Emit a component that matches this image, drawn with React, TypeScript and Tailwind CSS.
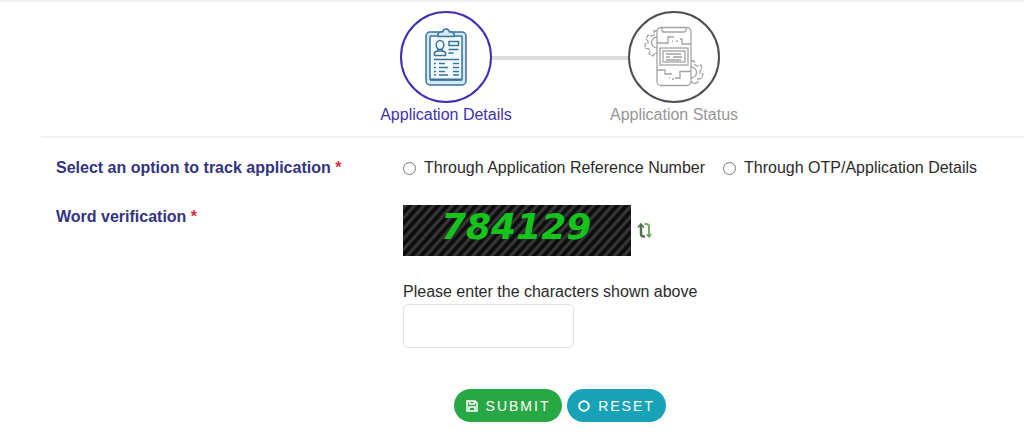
import type { ReactNode } from "react";

const ClipboardIcon = () => (
  <svg
    width={42}
    height={58}
    viewBox="0 0 42 58"
    fill="none"
    stroke="#3a7397"
    strokeWidth={1.5}
    aria-hidden="true"
  >
    <rect x="1" y="4" width="40" height="53" rx="4" fill="#cfe9f7" />
    <rect x="5" y="8" width="32" height="44" rx="1" fill="#f2fbff" />
    <path d="M13 8.500V5.500L15 4H17.500C18 2 19.500 1 21 1s3 1 3.500 3H27l2 1.500v3Z" fill="#cfe9f7" />
    <ellipse cx="15" cy="17" rx="3.800" ry="4.500" />
    <path d="M13 21v2.500M17 21v2.500M9.500 27.500v-3l2.500-1.500h6l2.500 1.500v3Z" />
    <rect x="24" y="13.500" width="9.500" height="4" />
    <path d="M23.500 21.500h10M23.500 25h5M9 31.500h25" />
    <path d="M9 35.500h2M14 35.500h6M28 35.500h6M9 39.500h2M14 39.500h9M28 39.500h6M9 43.500h2M14 43.500h6M28 43.500h6M9 47h2M14 47h9M28 47h6" />
    <path d="M5 51.500h32" strokeWidth={2} />
  </svg>
);

const PhoneGearsIcon = () => (
  <svg
    width={60}
    height={62}
    viewBox="0 0 60 62"
    fill="none"
    stroke="#a3a3a3"
    strokeWidth={1.3}
    aria-hidden="true"
  >
    <rect x="13" y="1.500" width="34" height="58" rx="4" />
    <path d="M18 2v2.500q0 1.500 2 1.500h20q2 0 2-1.500V2" />
    <path d="M13 17h11v-6h6M36 13h2v5h9M28 15h1M32 15h2" />
    <path d="M13 44h8v4h7M47 45.500H36V52h-5M25 52h1M28 53h2" />
    <rect x="16" y="22" width="28" height="17" />
    <rect x="19" y="25" width="22" height="11" />
    <path d="M22 28h15M22 31h4M29 31h9M22 34h15" />
    <path d="M13 5h-3v4l-3 1-3-1-2 4 2 2v2l-3 1v4l4 1 1 2-1 3 4 2 2-3h2" strokeDasharray="5 1" />
    <path d="M13 11a5.500 5.500 0 0 0 0 11" />
    <path
      d="M47 35h3l1 4 3 1 3-1 1 4-2 2v2l3 1-1 4-4 1v3l-4 2-2-2h-1"
      strokeDasharray="5 1"
    />
    <path d="M47 41a5.500 5.500 0 0 1 0 11" />
  </svg>
);

const RefreshIcon = () => (
  <svg width={16} height={17} viewBox="0 0 16 17" fill="none" aria-hidden="true">
    <path d="M4 3v9q0 2.500 2.500 2.500H8" stroke="#52704f" strokeWidth={2.5} />
    <path d="M1 5.500L4 2l3 3.500" stroke="#52704f" strokeWidth={1.5} />
    <path d="M7.500 2H9q3 0 3 2.500V14" stroke="#74a866" strokeWidth={2} />
    <path d="M9.500 12l2.500 3 2.500-3" stroke="#74a866" strokeWidth={1.5} />
  </svg>
);

const SaveIcon = () => (
  <svg
    width={12}
    height={12}
    viewBox="0 0 12 12"
    fill="none"
    stroke="currentColor"
    strokeWidth={1.5}
    aria-hidden="true"
  >
    <path d="M1 1h8l2 2v8H1ZM3.500 1v3h5V1M3 11V7h6v4" />
  </svg>
);

const ResetIcon = () => (
  <svg
    width={12}
    height={12}
    viewBox="0 0 12 12"
    fill="none"
    stroke="currentColor"
    aria-hidden="true"
  >
    <circle cx="6" cy="6" r="4.800" strokeWidth={2} />
  </svg>
);

const Captcha = () => (
  <svg width={228} height={51} viewBox="0 0 228 51" role="img" aria-label="Captcha">
    <defs>
      <pattern
        id="stripes"
        width="7"
        height="7"
        patternUnits="userSpaceOnUse"
        patternTransform="rotate(42)"
      >
        <rect width="7" height="7" fill="#0c0c0c" />
        <rect width="4" height="7" fill="#252325" />
        <rect x="1" width="2" height="7" fill="#3a373a" />
      </pattern>
    </defs>
    <rect width="228" height="51" fill="url(#stripes)" />
    <text
      x="38"
      y="34"
      fill="#13c51b"
      fontFamily="DejaVu Sans, sans-serif"
      fontSize="36"
      fontStyle="italic"
      fontWeight="bold"
    >
      784129
    </text>
  </svg>
);

const Step = ({
  label,
  circle,
  text,
  children,
}: {
  label: string;
  circle: string;
  text: string;
  children: ReactNode;
}) => (
  <li className="flex w-[136px] flex-col items-center">
    <div
      className={`flex h-[92px] w-[92px] items-center justify-center rounded-full border-2 bg-white ${circle}`}
    >
      {children}
    </div>
    <p className={`whitespace-nowrap ${text}`}>{label}</p>
  </li>
);

const Required = () => <span className="text-[#d9303e]">*</span>;

const App = () => {
  return (
    <main className="border-t-2 border-[#f0f0f0] bg-white pb-3 pl-[41px] font-['Liberation_Sans',Arial,sans-serif] text-[16px] leading-6 text-[#2b2b2b]">
      <ol className="flex justify-center pt-[9px] pb-[9px] pl-[55px]">
        <Step label="Application Details" circle="border-[#4030b5]" text="text-[#4030b5]">
          <ClipboardIcon />
        </Step>
        <li aria-hidden="true" className="-mx-[22px] mt-[45px] h-1 w-[136px] bg-[#dcdcdc]" />
        <Step label="Application Status" circle="border-[#505050]" text="text-[#969696]">
          <PhoneGearsIcon />
        </Step>
      </ol>

      <form className="border-t-2 border-[#f2f2f2] pt-[18px]">
        <fieldset className="grid grid-cols-[347px_1fr] pl-[15px]">
          <legend className="contents font-bold text-[#33337f]">
            <span>
              Select an option to track application <Required />
            </span>
          </legend>
          <div className="flex flex-wrap gap-x-[18px]">
            <label className="flex items-center gap-2">
              <input
                type="radio"
                name="track"
                className="h-[13px] w-[13px] appearance-none rounded-full border border-[#777] checked:border-4"
              />
              Through Application Reference Number
            </label>
            <label className="flex items-center gap-2">
              <input
                type="radio"
                name="track"
                className="h-[13px] w-[13px] appearance-none rounded-full border border-[#777] checked:border-4"
              />
              Through OTP/Application Details
            </label>
          </div>
        </fieldset>

        <div className="mt-[25px] grid grid-cols-[347px_1fr] pl-[15px]">
          <p className="font-bold text-[#33337f]">
            Word verification <Required />
          </p>
          <div>
            <div className="flex items-center gap-[6px]">
              <Captcha />
              <button type="button" aria-label="Refresh captcha">
                <RefreshIcon />
              </button>
            </div>
            <label htmlFor="captcha" className="mt-6 block">
              Please enter the characters shown above
            </label>
            <input
              id="captcha"
              type="text"
              className="block h-11 w-[171px] rounded-[5px] border border-[#dfe1e3] px-3"
            />
          </div>
        </div>

        <div className="mt-[41px] flex justify-center gap-[5px] pl-[55px] text-[14px] tracking-[2px] text-white">
          <button
            type="submit"
            className="flex h-[33px] w-[108px] items-center justify-center gap-2 rounded-full bg-[#28a745]"
          >
            <SaveIcon />
            SUBMIT
          </button>
          <button
            type="reset"
            className="flex h-[33px] w-[99px] items-center justify-center gap-2 rounded-full bg-[#17a2b8]"
          >
            <ResetIcon />
            RESET
          </button>
        </div>
      </form>
    </main>
  );
};

export default App;
